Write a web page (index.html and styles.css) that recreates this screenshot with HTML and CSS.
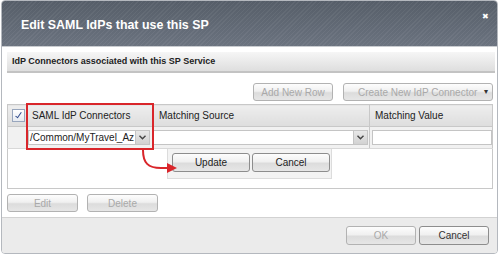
FILE: index.html
```html
<!DOCTYPE html>
<html lang="en">
<head>
  <meta charset="UTF-8">
  <title>Edit SAML IdPs that use this SP</title>
  <link rel="stylesheet" href="styles.css">
</head>
<body>
  <div class="dialog">
    <div class="title-bar">
      <span class="title">Edit SAML IdPs that use this SP</span>
      <span class="close">&#x2716;</span>
    </div>
    <div class="dialog-body">
      <div class="section-header">IdP Connectors associated with this SP Service</div>
      <div class="toolbar">
        <button class="btn disabled add-row">Add New Row</button>
        <button class="btn disabled create">Create New IdP Connector <span class="caret">&#9662;</span></button>
      </div>
      <div class="grid-wrap">
        <table class="grid">
          <tr class="head">
            <th class="col-check"><span class="checkbox"></span></th>
            <th class="col-saml">SAML IdP Connectors</th>
            <th class="col-source">Matching Source</th>
            <th class="col-value">Matching Value</th>
          </tr>
          <tr class="edit-row">
            <td class="col-check"></td>
            <td class="col-saml">
              <div class="select"><span class="select-text">/Common/MyTravel_Az</span><span class="drop">
                <svg width="7" height="5" viewBox="0 0 7 5"><path d="M0.5 0.8 L3.5 3.8 L6.5 0.8" fill="none" stroke="#444" stroke-width="1.4"/></svg>
              </span></div>
            </td>
            <td class="col-source">
              <div class="select wide"><span class="select-text"></span><span class="drop">
                <svg width="7" height="5" viewBox="0 0 7 5"><path d="M0.5 0.8 L3.5 3.8 L6.5 0.8" fill="none" stroke="#444" stroke-width="1.4"/></svg>
              </span></div>
            </td>
            <td class="col-value"><div class="input"></div></td>
          </tr>
          <tr class="filler">
            <td colspan="4"></td>
          </tr>
        </table>
        <div class="highlight"></div>
        <div class="row-actions">
          <button class="btn">Update</button>
          <button class="btn">Cancel</button>
        </div>
        <svg class="arrow" width="50" height="30" viewBox="0 0 50 30">
          <path d="M6 0 C6 13 11 18 24 18 L32 18" fill="none" stroke="#d9262b" stroke-width="2"/>
          <path d="M30 13 L40 18 L30 23 Z" fill="#d9262b"/>
        </svg>
      </div>
      <div class="list-actions">
        <button class="btn disabled small">Edit</button>
        <button class="btn disabled small">Delete</button>
      </div>
    </div>
    <div class="footer">
      <button class="btn disabled footer-btn">OK</button>
      <button class="btn footer-btn">Cancel</button>
    </div>
  </div>
</body>
</html>
```

FILE: styles.css
```css
body {
  margin: 0;
  background: #fff;
  font-family: "Liberation Sans", Arial, sans-serif;
}
.dialog {
  width: 497px;
  height: 254px;
  margin-left: 1px;
  box-sizing: border-box;
  border: 1px solid #b4b8be;
  border-radius: 4px;
  display: flex;
  flex-direction: column;
  overflow: hidden;
  background: #fff;
}
/* Barra de titulo con rayas */
.title-bar {
  height: 45px;
  flex: none;
  display: flex;
  align-items: center;
  justify-content: space-between;
  padding: 0 8px 0 19px;
  background:
    repeating-linear-gradient(135deg, rgba(255,255,255,0.05) 0 1px, rgba(0,0,0,0) 1px 3px),
    linear-gradient(#565e69, #6b737f);
  border-bottom: 1px solid #c9ccd0;
}
.title {
  color: #fff;
  font-weight: bold;
  font-size: 12.4px;
  padding-top: 2px;
}
.close {
  color: #fff;
  font-size: 8px;
  margin-top: -14px;
}
.dialog-body {
  flex: 1;
  padding: 5px 2px 0 5px;
}
.section-header {
  height: 19px;
  line-height: 19px;
  padding-left: 5px;
  font-size: 9px;
  font-weight: bold;
  color: #222;
  background: linear-gradient(#f6f6f6, #dedede);
  border-bottom: 2px solid #c3c3c3;
}
.toolbar {
  display: flex;
  justify-content: flex-end;
  gap: 10px;
  margin-top: 10px;
  padding-right: 2px;
}
.btn {
  height: 18px;
  padding: 0;
  font-family: "Liberation Sans", Arial, sans-serif;
  font-size: 10px;
  color: #333;
  background: linear-gradient(#fdfdfd 0%, #f0f0f0 45%, #dcdcdc 55%, #e6e6e6 100%);
  border: 1px solid #8d8d8d;
  border-radius: 3px;
  box-sizing: border-box;
}
.btn.disabled {
  color: #a9a9a9;
  border-color: #b2b2b2;
}
.add-row {
  width: 80px;
}
.create {
  width: 150px;
  text-align: left;
  padding-left: 14px;
  position: relative;
}
.caret {
  position: absolute;
  right: 4px;
  top: 3px;
  color: #333;
  font-size: 8px;
}
.grid-wrap {
  position: relative;
  margin-top: 3px;
  width: 486px;
}
.grid {
  width: 486px;
  border-collapse: collapse;
  table-layout: fixed;
  font-size: 10px;
  color: #222;
}
.grid th {
  height: 21px;
  padding: 0 0 0 5px;
  text-align: left;
  font-weight: normal;
  background: linear-gradient(#eeeeee, #dddddd);
  border: 1px solid #c8c8c8;
}
.grid td {
  border-left: 1px solid #c8c8c8;
  border-right: 1px solid #c8c8c8;
  padding: 0;
}
.col-check { width: 14px; }
.col-saml { width: 121px; }
.col-source { width: 210px; }
.grid th.col-check {
  padding-left: 4px;
}
.checkbox {
  display: block;
  width: 11px;
  height: 11px;
  border: 1px solid #98a6bd;
  background: linear-gradient(#ffffff, #e6eaf1);
  position: relative;
}
.checkbox::after {
  content: "";
  position: absolute;
  left: 4px;
  top: 1px;
  width: 2px;
  height: 6px;
  border: solid #2f4a8c;
  border-width: 0 1.5px 1.5px 0;
  transform: rotate(35deg);
}
.edit-row td {
  height: 21px;
  background: #f1f1f1;
  border-bottom: 1px solid #d8d8d8;
}
.edit-row td.col-check {
  border-right: none;
}
.edit-row td.col-saml {
  padding-left: 1px;
}
.select {
  display: flex;
  height: 15px;
  width: 122px;
  background: #fff;
  border: 1px solid #c4c4c4;
  box-sizing: border-box;
}
.select.wide {
  width: 215px;
  margin-left: -1px;
}
.select-text {
  flex: 1;
  line-height: 13px;
  padding-left: 1px;
  overflow: hidden;
  white-space: nowrap;
}
.drop {
  width: 13px;
  display: flex;
  align-items: center;
  justify-content: center;
  background: linear-gradient(#e8e8e8, #d2d2d2);
  border-left: 1px solid #c4c4c4;
}
.edit-row td.col-value {
  padding-left: 2px;
}
.input {
  height: 15px;
  background: #fff;
  border: 1px solid #c4c4c4;
  box-sizing: border-box;
}
.filler td {
  height: 39px;
  background: #fff;
  border-bottom: 1px solid #c8c8c8;
}
/* Marco rojo de anotacion */
.highlight {
  position: absolute;
  left: 19px;
  top: -1px;
  width: 128px;
  height: 47px;
  box-sizing: border-box;
  border: 2px solid #d9262b;
}
.arrow {
  position: absolute;
  left: 130px;
  top: 46px;
}
.row-actions {
  position: absolute;
  left: 160px;
  top: 45px;
  width: 165px;
  height: 30px;
  box-sizing: border-box;
  display: flex;
  gap: 2px;
  padding: 4px 0 0 4px;
  background: #f3f3f3;
  border: 1px solid #dcdcdc;
  border-top: none;
}
.row-actions .btn {
  width: 78px;
  height: 19px;
  color: #222;
}
.list-actions {
  display: flex;
  gap: 9px;
  margin-top: 5px;
}
.btn.small {
  width: 71px;
}
.footer {
  height: 35px;
  flex: none;
  display: flex;
  align-items: center;
  justify-content: flex-end;
  gap: 3px;
  padding-right: 8px;
  background: #ebebeb;
  border-top: 1px solid #d2d2d2;
}
.footer-btn {
  width: 70px;
  height: 19px;
  font-size: 10px;
}
```
